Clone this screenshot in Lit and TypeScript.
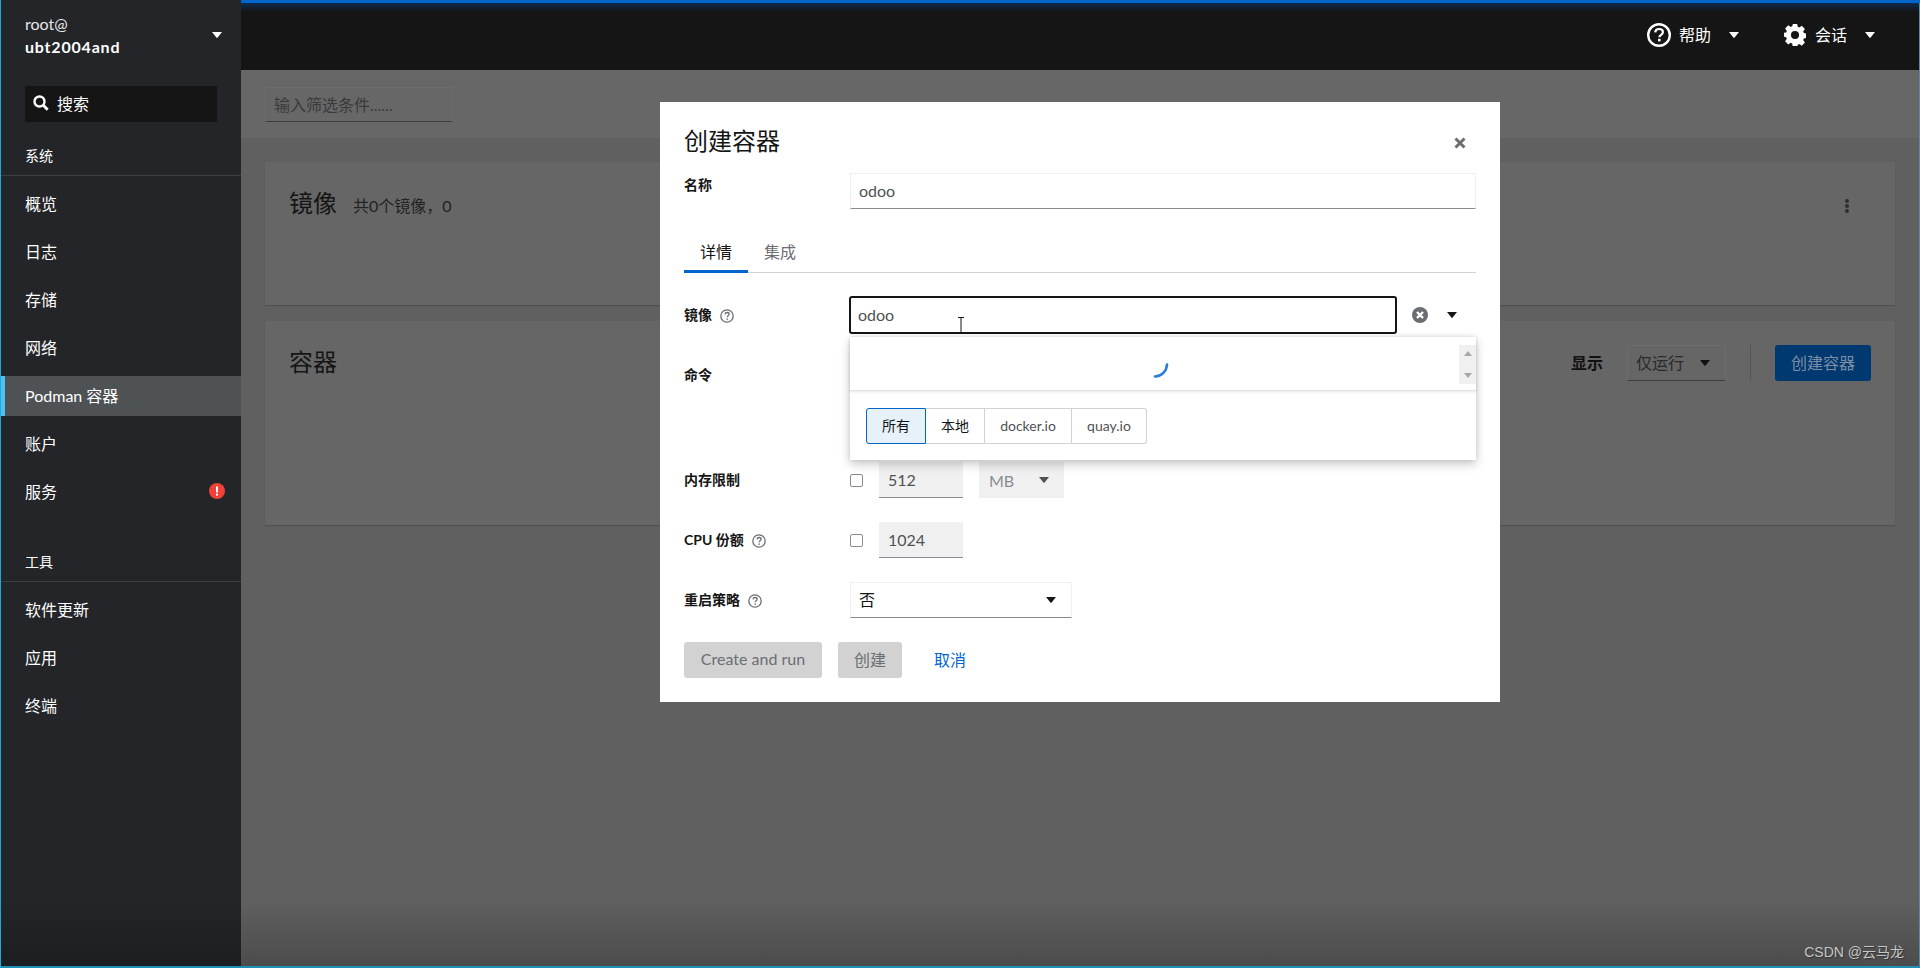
import { LitElement, css, html, svg } from 'lit';
import { customElement } from 'lit/decorators.js';

const caret = (cls = 'caret') => html`<svg class=${cls} viewBox="0 0 10 6"><path d="M0 0h10L5.6 5.6a.8.8 0 0 1-1.2 0z" fill="currentColor"/></svg>`;

const helpIcon = html`<svg class="help" viewBox="0 0 14 14">
  <circle cx="7" cy="7" r="6.2" fill="none" stroke="currentColor" stroke-width="1.3"/>
  <path d="M5 5.4c.1-1.2 1-1.9 2.1-1.9 1.2 0 2 .7 2 1.7 0 1.5-1.9 1.5-1.9 3" fill="none" stroke="currentColor" stroke-width="1.3"/>
  <rect x="6.5" y="9.4" width="1.4" height="1.4" fill="currentColor"/>
</svg>`;

const gearPath = svg`<path fill-rule="evenodd" d="M9.6 0h4.8l.6 3.1c.6.2 1.2.5 1.7.8L19.4 2l3.4 3.4-1.9 2.7c.3.5.6 1.1.8 1.7l3.1.6v4.8l-3.1.6c-.2.6-.5 1.2-.8 1.7l1.9 2.7-3.4 3.4-2.7-1.9c-.5.3-1.1.6-1.7.8l-.6 3.1H9.6L9 21.2c-.6-.2-1.2-.5-1.7-.8L4.6 22.3 1.2 18.9l1.9-2.7c-.3-.5-.6-1.1-.8-1.7L0 14V9.6l2.3-.4c.2-.6.5-1.2.8-1.7L1.2 4.8 4.6 1.4l2.7 1.9c.5-.3 1.1-.6 1.7-.8zM12 7.6a4.4 4.4 0 1 0 0 8.8 4.4 4.4 0 0 0 0-8.8z"/>`;

@customElement('side-nav')
export class SideNav extends LitElement {
  static styles = css`
    :host {
      display: flex;
      flex-direction: column;
      width: 240px;
      flex: none;
      background: #232528;
      color: #fff;
      font-size: 16px;
      z-index: 2;
    }
    .host-switch {
      display: flex;
      justify-content: space-between;
      align-items: center;
      height: 70px;
      padding: 0 19px 0 24px;
      line-height: 24px;
    }
    .host-switch small { display: block; font-size: 16px; color: #e8e8e8; }
    .host-switch b { display: block; margin-top: -1px; font-weight: 700; letter-spacing: 0.8px; }
    .caret { width: 10px; height: 6px; display: block; }
    .search {
      display: flex;
      align-items: center;
      gap: 8px;
      height: 36px;
      margin: 16px 24px 0;
      padding: 0 0 2px 8px;
      box-sizing: border-box;
      background: #151515;
    }
    .search svg { width: 16px; height: 16px; }
    .group {
      height: 39px;
      margin-top: 15px;
      padding: 8px 24px 0;
      font-size: 14px;
      line-height: 21px;
      box-sizing: border-box;
      border-bottom: 1px solid #3c3f42;
    }
    .group.tools { margin-top: 23px; }
    ul { list-style: none; margin: 0; padding: 8px 0 0; }
    li {
      display: flex;
      justify-content: space-between;
      align-items: center;
      height: 40px;
      margin-bottom: 8px;
      padding: 0 16px 3px 24px;
      box-sizing: border-box;
    }
    li.active {
      background: #4f5255;
      box-shadow: inset 4px 0 0 #4dc3f5;
    }
    .alert { width: 16px; height: 16px; }
  `;

  render() {
    const items = ['概览', '日志', '存储', '网络', 'Podman 容器', '账户', '服务'];
    return html`
      <div class="host-switch">
        <div><small>root@</small><b>ubt2004and</b></div>
        ${caret()}
      </div>
      <div class="search">
        <svg viewBox="0 0 16 16"><circle cx="6.5" cy="6.5" r="5" fill="none" stroke="#fff" stroke-width="2.4"/><path d="M10.3 10.3l4.4 4.4" stroke="#fff" stroke-width="2.8"/></svg>
        <span>搜索</span>
      </div>
      <div class="group">系统</div>
      <ul>
        ${items.map(
          (item, i) => html`<li class=${i === 4 ? 'active' : ''}>
            <span>${item}</span>
            ${item === '服务'
              ? html`<svg class="alert" viewBox="0 0 16 16"><circle cx="8" cy="8" r="8" fill="#ef4137"/><rect x="7" y="3.4" width="2" height="6" fill="#fff"/><rect x="7" y="10.6" width="2" height="2" fill="#fff"/></svg>`
              : ''}
          </li>`,
        )}
      </ul>
      <div class="group tools">工具</div>
      <ul>
        ${['软件更新', '应用', '终端'].map((item) => html`<li>${item}</li>`)}
      </ul>
    `;
  }
}

@customElement('create-dialog')
export class CreateDialog extends LitElement {
  static styles = css`
    :host {
      display: block;
      position: absolute;
      left: 419px;
      top: 32px;
      width: 840px;
      height: 600px;
      box-sizing: border-box;
      padding: 24px;
      background: #fff;
      color: #151515;
      font-size: 16px;
    }
    h1 {
      margin: 0;
      font-size: 24px;
      font-weight: 400;
      line-height: 30px;
    }
    .close {
      position: absolute;
      right: 34px;
      top: 35px;
      width: 12px;
      height: 12px;
      color: #6a6e73;
    }
    .row {
      display: grid;
      grid-template-columns: 166px 1fr;
      align-items: start;
    }
    label {
      display: flex;
      align-items: center;
      gap: 8px;
      min-height: 24px;
      font-size: 14px;
      font-weight: 700;
      line-height: 24px;
    }
    .help { width: 14px; height: 14px; color: #6a6e73; margin-top: 2px; }
    .field {
      height: 36px;
      box-sizing: border-box;
      display: flex;
      align-items: center;
      padding: 0 8px;
      border: 1px solid #f0f0f0;
      border-bottom-color: #8a8d90;
      line-height: 24px;
      color: #4f5255;
    }
    .name-row { margin-top: 17px; }
    .tabs {
      display: flex;
      margin-top: 27px;
      height: 37px;
      box-sizing: border-box;
      border-bottom: 1px solid #d2d2d2;
    }
    .tab {
      width: 64px;
      height: 37px;
      box-sizing: border-box;
      text-align: center;
      line-height: 32px;
      color: #6a6e73;
    }
    .tab.on { color: #151515; border-bottom: 3px solid #06c; }
    .image-row { margin-top: 23px; }
    .image-row label { margin-top: 7px; }
    .combo { display: flex; align-items: center; }
    .combo-input {
      width: 548px;
      height: 38px;
      margin-left: -1px;
      box-sizing: border-box;
      display: flex;
      align-items: center;
      padding: 0 8px 2px 7px;
      border: 2px solid #151515;
      border-radius: 3px;
      color: #4f5255;
    }
    .clear { width: 16px; height: 16px; margin-left: 15px; }
    .combo .caret { margin-left: 19px; color: #151515; }
    .caret { width: 10px; height: 6px; display: block; flex: none; }
    .command-row { margin-top: 24px; height: 80px; }
    .command-row label { margin-top: 5px; }
    .limit-row { margin-top: 24px; }
    .limit-row label { min-height: 36px; line-height: 36px; }
    .inline { display: flex; align-items: center; }
    input[type='checkbox'] {
      appearance: none;
      width: 13px;
      height: 13px;
      margin: 1px 16px 0 0;
      border: 1px solid #8a8d90;
      border-radius: 2px;
      background: #fff;
    }
    .num {
      width: 84px;
      height: 36px;
      box-sizing: border-box;
      padding: 0 9px;
      display: flex;
      align-items: center;
      background: #f0f0f0;
      border-bottom: 1px solid #8a8d90;
      color: #4f5255;
    }
    .unit {
      width: 85px;
      height: 36px;
      margin-left: 16px;
      box-sizing: border-box;
      padding: 0 15px 0 10px;
      display: flex;
      align-items: center;
      justify-content: space-between;
      background: #f0f0f0;
      color: #8a8d90;
    }
    .unit .caret { color: #4f5255; }
    .select {
      width: 222px;
      justify-content: space-between;
      padding-right: 15px;
      color: #151515;
    }
    .select .caret { color: #151515; }
    .actions {
      display: flex;
      align-items: center;
      gap: 16px;
      margin-top: 24px;
    }
    .btn {
      height: 36px;
      padding: 0 0 3px;
      box-sizing: border-box;
      display: flex;
      align-items: center;
      justify-content: center;
      border-radius: 3px;
      background: #d2d2d2;
      color: #6a6e73;
    }
    .btn.run { width: 138px; }
    .btn.plain { width: 64px; }
    .link { margin-left: 16px; padding-bottom: 3px; color: #06c; }
    .menu {
      position: absolute;
      left: 190px;
      top: 235px;
      width: 626px;
      height: 123px;
      background: #fff;
      box-shadow: 0 4px 10px rgba(3, 3, 3, 0.22), 0 0 4px rgba(3, 3, 3, 0.1);
    }
    .results {
      position: relative;
      height: 54px;
      box-sizing: border-box;
      border-bottom: 1px solid #e4e4e4;
      box-shadow: 0 1px 3px rgba(3, 3, 3, 0.1);
    }
    .spinner { position: absolute; left: 302px; top: 25px; width: 18px; height: 18px; }
    .scroll {
      position: absolute;
      right: 0;
      top: 8px;
      width: 17px;
      height: 39px;
      display: flex;
      flex-direction: column;
      justify-content: space-between;
      align-items: center;
      padding: 6px 0;
      box-sizing: border-box;
      background: #f0f0f0;
      color: #a8a8a8;
    }
    .scroll svg { width: 8px; height: 5px; display: block; }
    .filters { display: flex; margin: 17px 0 0 16px; font-size: 14px; }
    .filters span {
      height: 36px;
      box-sizing: border-box;
      display: flex;
      align-items: center;
      justify-content: center;
      padding-bottom: 2px;
      border: 1px solid #d2d2d2;
      border-left: none;
      color: #4f5255;
    }
    .filters span:nth-child(2) { width: 59px; color: #151515; }
    .filters span:nth-child(3) { width: 87px; }
    .filters span:last-child { width: 75px; border-radius: 0 3px 3px 0; }
    .filters span.on {
      width: 60px;
      border: 1px solid #06c;
      border-radius: 3px 0 0 3px;
      background: #e7f1fa;
      color: #151515;
    }
    .cursor { position: absolute; left: 297px; top: 215px; width: 8px; height: 17px; }
  `;

  render() {
    return html`
      <h1>创建容器</h1>
      <svg class="close" viewBox="0 0 12 12"><path d="M1.5 1.5l9 9M10.5 1.5l-9 9" stroke="currentColor" stroke-width="3"/></svg>

      <div class="row name-row">
        <label>名称</label>
        <div class="field">odoo</div>
      </div>

      <div class="tabs">
        <div class="tab on">详情</div>
        <div class="tab">集成</div>
      </div>

      <div class="row image-row">
        <label>镜像 ${helpIcon}</label>
        <div class="combo">
          <div class="combo-input">odoo</div>
          <svg class="clear" viewBox="0 0 16 16"><circle cx="8" cy="8" r="8" fill="#6a6e73"/><path d="M5 5l6 6M11 5l-6 6" stroke="#fff" stroke-width="2.4"/></svg>
          ${caret()}
        </div>
      </div>

      <div class="row command-row"><label>命令</label></div>

      <div class="row limit-row">
        <label>内存限制</label>
        <div class="inline">
          <input type="checkbox" />
          <div class="num">512</div>
          <div class="unit">MB ${caret()}</div>
        </div>
      </div>

      <div class="row limit-row">
        <label>CPU 份额 ${helpIcon}</label>
        <div class="inline">
          <input type="checkbox" />
          <div class="num">1024</div>
        </div>
      </div>

      <div class="row limit-row">
        <label>重启策略 ${helpIcon}</label>
        <div class="field select">否 ${caret()}</div>
      </div>

      <div class="actions">
        <div class="btn run">Create and run</div>
        <div class="btn plain">创建</div>
        <div class="link">取消</div>
      </div>

      <div class="menu">
        <div class="results">
          <svg class="spinner" viewBox="0 0 18 18"><path d="M15 2.5A12.5 12.5 0 0 1 3 14.5" fill="none" stroke="#2b7fd4" stroke-width="2.6" stroke-linecap="round"/></svg>
          <div class="scroll">
            <svg viewBox="0 0 8 5"><path d="M0 5L4 0l4 5z" fill="currentColor"/></svg>
            <svg viewBox="0 0 8 5"><path d="M0 0l4 5 4-5z" fill="currentColor"/></svg>
          </div>
        </div>
        <div class="filters">
          <span class="on">所有</span><span>本地</span><span>docker.io</span><span>quay.io</span>
        </div>
      </div>

      <svg class="cursor" viewBox="0 0 8 17"><path d="M1 .5h6M1 16.5h6M4 .5v16" fill="none" stroke="#151515" stroke-width="1"/></svg>
    `;
  }
}

@customElement('app-root')
export class AppRoot extends LitElement {
  static styles = css`
    :host {
      display: flex;
      position: relative;
      height: 968px;
      width: 1920px;
      overflow: hidden;
      box-sizing: border-box;
      background: #666;
      font-family: 'Lato', 'Noto Sans CJK SC', sans-serif;
      font-size: 16px;
      border-left: 1px solid #1ea9d9;
    }
    .right { flex: 1; display: flex; flex-direction: column; min-width: 0; position: relative; }
    header {
      height: 70px;
      box-sizing: border-box;
      flex: none;
      display: flex;
      justify-content: flex-end;
      align-items: center;
      gap: 45px;
      padding: 0 45px 0 0;
      color: #fff;
      background: linear-gradient(#06c 0 3px, #0d2c4e 3px, #151515 12px);
    }
    .menu-btn { display: flex; align-items: center; }
    .menu-btn span { padding-bottom: 2px; }
    .menu-btn svg.icon { width: 24px; height: 24px; margin-right: 8px; fill: #fff; }
    .menu-btn svg.gear { width: 22px; height: 22px; margin-right: 9px; }
    .menu-btn .caret { margin-left: 18px; }
    .caret { width: 10px; height: 6px; display: block; }
    main {
      flex: 1;
      position: relative;
      background: #606060;
      color: #151515;
    }
    .filter-bar {
      height: 68px;
      box-sizing: border-box;
      padding: 17px 24px 0;
      background: #676767;
    }
    .filter-input {
      width: 188px;
      height: 35px;
      box-sizing: border-box;
      padding: 0 8px 2px;
      display: flex;
      align-items: center;
      border: 1px solid #6d6d6d;
      border-bottom-color: #3e3e3e;
      color: #3a3a3a;
    }
    .card {
      display: flex;
      justify-content: space-between;
      margin: 16px 24px 0;
      width: 1630px;
      box-sizing: border-box;
      padding: 24px;
      background: #666;
      box-shadow: 0 1px 1px rgba(3, 3, 3, 0.15);
    }
    .card.images { height: 143px; margin-top: 24px; }
    .card.containers { height: 204px; }
    .title { display: flex; align-items: baseline; gap: 16px; margin-top: 2px; font-size: 24px; line-height: 30px; }
    .title small { font-size: 16px; color: #222; }
    .kebab { width: 4px; height: 14px; margin: 13px 22px 0 0; fill: #2e2e2e; }
    .tools { display: flex; align-items: center; height: 36px; margin-top: 0; }
    .tools b { font-weight: 700; margin-right: 24px; color: #111; padding-bottom: 2px; }
    .show {
      width: 99px;
      height: 36px;
      box-sizing: border-box;
      display: flex;
      align-items: center;
      justify-content: space-between;
      padding: 0 15px 2px 8px;
      border: 1px solid #6d6d6d;
      border-bottom-color: #3e3e3e;
      color: #2a2a2a;
    }
    .show .caret { color: #111; margin-top: 2px; }
    .sep { width: 1px; height: 36px; background: #555; margin: 0 24px; }
    .create {
      width: 96px;
      height: 36px;
      padding-bottom: 2px;
      box-sizing: border-box;
      display: flex;
      align-items: center;
      justify-content: center;
      border-radius: 3px;
      background: #00396f;
      color: #7b8ea3;
    }
    .fade {
      position: absolute;
      left: 0;
      right: 0;
      bottom: 0;
      height: 68px;
      z-index: 3;
      background: linear-gradient(rgba(0, 0, 0, 0), rgba(0, 0, 0, 0.22));
    }
    .mark {
      position: absolute;
      right: 16px;
      bottom: 7px;
      z-index: 4;
      font-family: 'Liberation Sans', 'Noto Sans CJK SC', sans-serif;
      font-size: 14px;
      color: #c6c6c6;
      text-shadow: 1px 1px 1px #333;
    }
    .edge-r { position: absolute; top: 3px; right: 0; bottom: 0; width: 1px; z-index: 4; background: #4b8fb3; }
    .edge-b { position: absolute; left: 0; right: 0; bottom: 0; height: 2px; z-index: 4; background: #1e8fb5; }
  `;

  render() {
    return html`
      <side-nav></side-nav>
      <div class="right">
        <header>
          <div class="menu-btn">
            <svg class="icon" viewBox="0 0 24 24">
              <circle cx="12" cy="12" r="10.8" fill="none" stroke="#fff" stroke-width="2.4"/>
              <path d="M8.2 9.4c.2-2.2 1.8-3.4 3.9-3.4 2.2 0 3.8 1.3 3.8 3.1 0 2.8-3.5 2.6-3.5 5.2" fill="none" stroke="#fff" stroke-width="2.2"/>
              <rect x="11" y="15.8" width="2.6" height="2.6"/>
            </svg>
            <span>帮助</span>${caret()}
          </div>
          <div class="menu-btn">
            <svg class="icon gear" viewBox="0 0 24 24">${gearPath}</svg>
            <span>会话</span>${caret()}
          </div>
        </header>
        <main>
          <div class="filter-bar"><div class="filter-input">输入筛选条件......</div></div>
          <section class="card images">
            <div class="title">镜像 <small>共0个镜像，0</small></div>
            <svg class="kebab" viewBox="0 0 4 14"><circle cx="2" cy="2" r="2"/><circle cx="2" cy="7" r="2"/><circle cx="2" cy="12" r="2"/></svg>
          </section>
          <section class="card containers">
            <div class="title">容器</div>
            <div class="tools">
              <b>显示</b>
              <div class="show">仅运行 ${caret()}</div>
              <div class="sep"></div>
              <div class="create">创建容器</div>
            </div>
          </section>
          <create-dialog></create-dialog>
        </main>
        <div class="edge-r"></div>
      </div>
      <div class="fade"></div>
      <div class="mark">CSDN @云马龙</div>
      <div class="edge-b"></div>
    `;
  }
}
